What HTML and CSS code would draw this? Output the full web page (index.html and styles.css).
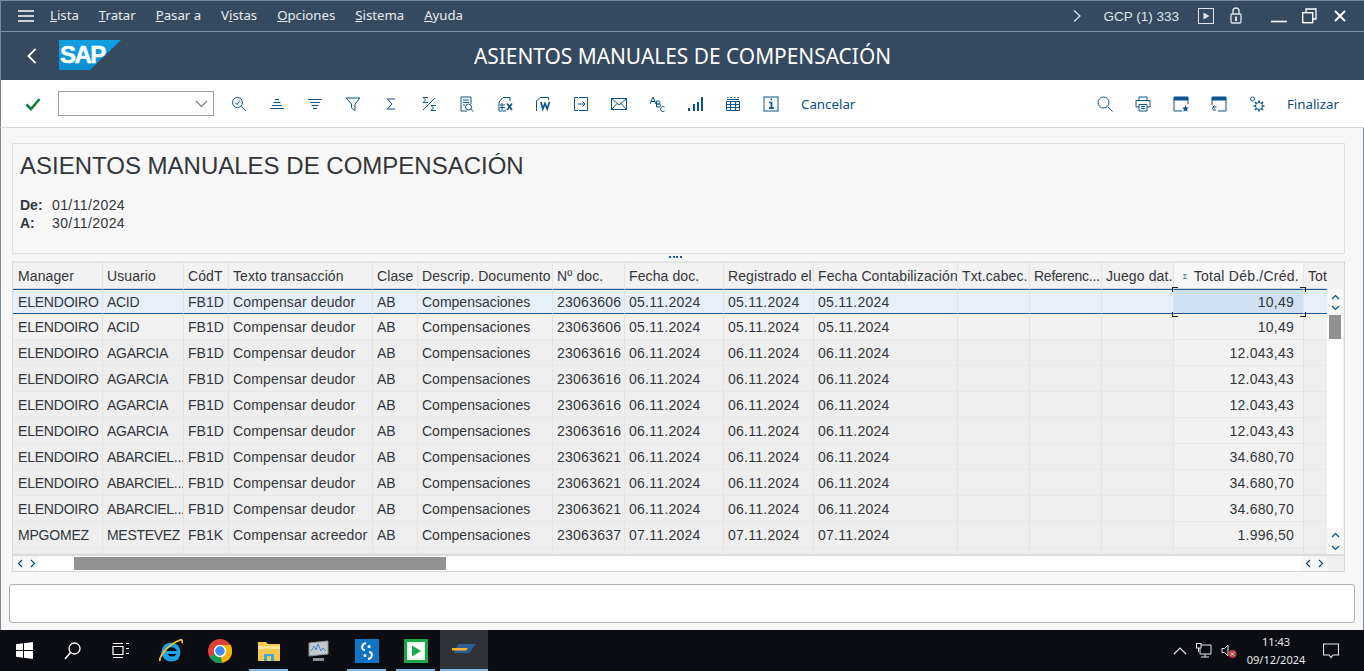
FILE: index.html
```html
<!DOCTYPE html>
<html lang="es">
<head>
<meta charset="utf-8">
<title>Asientos manuales de compensación</title>
<link rel="stylesheet" href="styles.css">
</head>
<body>
<div class="window">
  <div class="menubar">
    <svg class="hamb" width="16" height="12" viewBox="0 0 16 12"><path d="M0 1h16M0 6h16M0 11h16" stroke="#fff" stroke-width="1.4"/></svg>
    <nav class="menus">
      <span><u>L</u>ista</span><span><u>T</u>ratar</span><span><u>P</u>asar a</span><span>V<u>i</u>stas</span><span><u>O</u>pciones</span><span><u>S</u>istema</span><span><u>A</u>yuda</span>
    </nav>
    <div class="sysarea">
      <svg class="chev" width="8" height="12" viewBox="0 0 8 12"><path d="M1 .5 7 6 1 11.5" fill="none" stroke="#dfe5ea" stroke-width="1.2"/></svg>
      <span class="sysname">GCP (1) 333</span>
      <svg class="sysico1" width="16" height="16" viewBox="0 0 16 16"><rect x=".5" y=".5" width="15" height="15" fill="none" stroke="#dfe5ea"/><path d="M5.500 4.500v7l6-3.500z" fill="#dfe5ea"/></svg>
      <svg class="sysico2" width="12" height="17" viewBox="0 0 12 17"><path d="M3 7V4a3 3 0 0 1 6 0v3" fill="none" stroke="#dfe5ea" stroke-width="1.4"/><rect x="1" y="7" width="10" height="9" rx="1" fill="none" stroke="#dfe5ea" stroke-width="1.300"/><path d="M5 9.500h2v4.500H5z" fill="#dfe5ea"/></svg>
      <svg class="winbtn-min" width="16" height="3" viewBox="0 0 16 3"><path d="M0 1.500h16" stroke="#fff" stroke-width="1.600"/></svg>
      <svg class="winbtn-max" width="15" height="16" viewBox="0 0 15 16"><path d="M4 4V1h10v10h-3" fill="none" stroke="#fff" stroke-width="1.300"/><rect x=".7" y="4.700" width="10" height="10" fill="none" stroke="#fff" stroke-width="1.400"/></svg>
      <svg class="winbtn-close" width="12" height="12" viewBox="0 0 12 12"><path d="M1 1l10 10M11 1 1 11" stroke="#fff" stroke-width="1.800"/></svg>
    </div>
  </div>
  <div class="titlebar">
    <svg class="back" width="10" height="16" viewBox="0 0 10 16"><path d="M8.500 1 1.500 8l7 7" fill="none" stroke="#fff" stroke-width="1.800"/></svg>
    <div class="logo"><span>SAP</span></div>
    <h1 class="apptitle">ASIENTOS MANUALES DE COMPENSACIÓN</h1>
  </div>
  <div class="toolbar">
    <svg class="ok" width="16" height="14" viewBox="0 0 16 14"><path d="M1.500 7.500 6 12 14.500 2" fill="none" stroke="#107e3e" stroke-width="2.600"/></svg>
    <div class="combo"><svg width="13" height="8" viewBox="0 0 13 8"><path d="M1 1l5.500 5.500L12 1" fill="none" stroke="#6d7b87" stroke-width="1.100"/></svg></div>
    <div class="tools">
      <svg class="ico" viewBox="0 0 16 16"><circle cx="6.500" cy="6.500" r="5" /><path d="M10.500 10.500 15 15M4 6.500l2 2 3-4"/></svg>
      <svg class="ico" viewBox="0 0 16 16"><path d="M6 3.500h4M4.500 6.500h7M3 9.500h10M1 12.500h14"/></svg>
      <svg class="ico" viewBox="0 0 16 16"><path d="M1 3.500h14M3 6.500h10M4.500 9.500h7M6 12.500h4"/></svg>
      <svg class="ico" viewBox="0 0 16 16"><path d="M1 2h14L10 8v6.500L6.500 12V8z"/></svg>
      <svg class="ico" viewBox="0 0 16 16"><path d="M12 3H4.500L9 8l-4.500 5H12"/></svg>
      <svg class="ico" viewBox="0 0 16 16"><path d="M7 1.500H2l2.500 2.500L2 6.500h5M14 2 2 14M15 9.500h-5L12.500 12 10 14.500h5"/></svg>
      <svg class="ico" viewBox="0 0 16 16"><path d="M8 15H2V1h10v7M4 4h6M4 6.500h6M4 9h2"/><circle cx="9.500" cy="11" r="3"/><path d="M11.500 13l3 2.500"/></svg>
      <svg class="ico" viewBox="0 0 16 16"><path d="M2 6l4-4.500h7V5M2 6v9h7M3 9h5M3 11.500h5M5 7v7"/><path class="thick" d="M10 7.500l5 6.500M15 7.500l-5 6.500"/></svg>
      <svg class="ico" viewBox="0 0 16 16"><path d="M1.500 15V5l3.500-3.500h8.500V4"/><path class="thick" d="M6 6l1.800 7L10 7.500l2.200 5.500L14.500 6"/></svg>
      <svg class="ico" viewBox="0 0 16 16"><path d="M5 1.500H1.500v13H5M6 1.500h8.500v13H6M5 8h7M9.500 5.500 12 8l-2.500 2.500"/></svg>
      <svg class="ico" viewBox="0 0 16 16"><rect x=".5" y="2.500" width="15" height="11"/><path d="M.5 2.500 8 9l7.500-6.500M.5 13.500l5.500-6M15.500 13.500l-5.500-6"/></svg>
      <svg class="ico" viewBox="0 0 16 16"><path d="M1 8 4 1l3 7M2 5.500h4M7.500 5h2a1.500 1.500 0 0 1 0 3h-2zM7.500 8H10a1.500 1.500 0 0 1 0 3H7.500zM15.500 11a2.500 2.500 0 1 0 0 4"/></svg>
      <svg class="ico solid" viewBox="0 0 16 16"><path d="M1 12h2v3H1zM6 8h2v7H6zM10 6h2v9h-2zM14 1h2v14h-2z"/></svg>
      <svg class="ico" viewBox="0 0 16 16"><path d="M1.500 5.500h13v9h-13zM1.500 8.500h13M1.500 11.500h13M5.500 5.500v9M10.500 5.500v9"/><path d="M2 1.500h1.500M5.500 1.500h1.500M9 1.500h1.500M12.500 1.500h1.500M2 3.500h12"/></svg>
      <svg class="ico" viewBox="0 0 16 16"><rect x="1" y="1" width="14" height="14"/><path class="thick" d="M6 6.500h2.500V12M6 12.200h5M7.500 3.300h1.500"/></svg>
      <span class="tbtext">Cancelar</span>
    </div>
    <div class="tools-right">
      <svg class="ico" viewBox="0 0 16 16"><circle cx="6.500" cy="6.500" r="5.500"/><path d="M10.500 10.500 15.500 15.500"/></svg>
      <svg class="ico" viewBox="0 0 16 16"><path d="M4 4V1h8v3M1 11V4.500h14V11h-3M4 11H1M4 8.500h8V15H4zM6 10.500h4M6 12.500h4"/></svg>
      <svg class="ico" viewBox="0 0 16 16"><path d="M1 3h14v5M1 3v12h8"/><path class="bar" d="M1 1h14v3H1z"/><path class="solidp" d="M12.500 9l1 2.500 2.500.2-2 1.600.7 2.500-2.200-1.400-2.200 1.400.7-2.500-2-1.600 2.500-.2z"/></svg>
      <svg class="ico" viewBox="0 0 16 16"><path d="M1 3v6M15 3v12H7"/><path class="bar" d="M1 1h14v3H1z"/><path d="M5.500 11H3a1.500 1.500 0 0 0 0 3h2M3.500 9.500 2 11l1.500 1.500"/></svg>
      <svg class="ico" viewBox="0 0 16 16"><circle cx="3.500" cy="3" r="2"/><circle cx="10" cy="10" r="3.500"/><path class="thick" d="M10 4.500v2M10 13.500v2M4.500 10h2M13.500 10h2M6 6l1.500 1.500M12.500 12.500 14 14M6 14l1.500-1.500M12.500 7.500 14 6"/></svg>
      <span class="tbtext">Finalizar</span>
    </div>
  </div>

  <div class="content">
    <section class="hdr">
      <h2>ASIENTOS MANUALES DE COMPENSACIÓN</h2>
      <dl>
        <dt>De:</dt><dd>01/11/2024</dd>
        <dt>A:</dt><dd>30/11/2024</dd>
      </dl>
    </section>
    <div class="splitter"><span class="dots"></span></div>

    <section class="alv">
      <div class="grid">
        <div class="tablewrap">
          <table class="tbl">
            <colgroup>
              <col class="c1"><col class="c2"><col class="c3"><col class="c4"><col class="c5"><col class="c6"><col class="c7"><col class="c8"><col class="c9"><col class="c10"><col class="c11"><col class="c12"><col class="c13"><col class="c14"><col class="c15">
            </colgroup>
            <thead>
              <tr>
                <th>Manager</th><th>Usuario</th><th>CódT</th><th>Texto transacción</th><th>Clase</th><th>Descrip. Documento</th><th>Nº doc.</th><th>Fecha doc.</th><th>Registrado el</th><th>Fecha Contabilización</th><th>Txt.cabec.</th><th>Referenc...</th><th>Juego dat.</th><th class="sum"><span class="sig">Σ</span>Total Déb./Créd.</th><th>Tot</th>
              </tr>
            </thead>
            <tbody id="rows">
              <tr class="sel"><td>ELENDOIRO</td><td>ACID</td><td>FB1D</td><td>Compensar deudor</td><td>AB</td><td>Compensaciones</td><td>23063606</td><td>05.11.2024</td><td>05.11.2024</td><td>05.11.2024</td><td></td><td></td><td></td><td class="num cur">10,49</td><td></td></tr>
              <tr><td>ELENDOIRO</td><td>ACID</td><td>FB1D</td><td>Compensar deudor</td><td>AB</td><td>Compensaciones</td><td>23063606</td><td>05.11.2024</td><td>05.11.2024</td><td>05.11.2024</td><td></td><td></td><td></td><td class="num">10,49</td><td></td></tr>
              <tr><td>ELENDOIRO</td><td>AGARCIA</td><td>FB1D</td><td>Compensar deudor</td><td>AB</td><td>Compensaciones</td><td>23063616</td><td>06.11.2024</td><td>06.11.2024</td><td>06.11.2024</td><td></td><td></td><td></td><td class="num">12.043,43</td><td></td></tr>
              <tr><td>ELENDOIRO</td><td>AGARCIA</td><td>FB1D</td><td>Compensar deudor</td><td>AB</td><td>Compensaciones</td><td>23063616</td><td>06.11.2024</td><td>06.11.2024</td><td>06.11.2024</td><td></td><td></td><td></td><td class="num">12.043,43</td><td></td></tr>
              <tr><td>ELENDOIRO</td><td>AGARCIA</td><td>FB1D</td><td>Compensar deudor</td><td>AB</td><td>Compensaciones</td><td>23063616</td><td>06.11.2024</td><td>06.11.2024</td><td>06.11.2024</td><td></td><td></td><td></td><td class="num">12.043,43</td><td></td></tr>
              <tr><td>ELENDOIRO</td><td>AGARCIA</td><td>FB1D</td><td>Compensar deudor</td><td>AB</td><td>Compensaciones</td><td>23063616</td><td>06.11.2024</td><td>06.11.2024</td><td>06.11.2024</td><td></td><td></td><td></td><td class="num">12.043,43</td><td></td></tr>
              <tr><td>ELENDOIRO</td><td>ABARCIEL...</td><td>FB1D</td><td>Compensar deudor</td><td>AB</td><td>Compensaciones</td><td>23063621</td><td>06.11.2024</td><td>06.11.2024</td><td>06.11.2024</td><td></td><td></td><td></td><td class="num">34.680,70</td><td></td></tr>
              <tr><td>ELENDOIRO</td><td>ABARCIEL...</td><td>FB1D</td><td>Compensar deudor</td><td>AB</td><td>Compensaciones</td><td>23063621</td><td>06.11.2024</td><td>06.11.2024</td><td>06.11.2024</td><td></td><td></td><td></td><td class="num">34.680,70</td><td></td></tr>
              <tr><td>ELENDOIRO</td><td>ABARCIEL...</td><td>FB1D</td><td>Compensar deudor</td><td>AB</td><td>Compensaciones</td><td>23063621</td><td>06.11.2024</td><td>06.11.2024</td><td>06.11.2024</td><td></td><td></td><td></td><td class="num">34.680,70</td><td></td></tr>
              <tr><td>MPGOMEZ</td><td>MESTEVEZ</td><td>FB1K</td><td>Compensar acreedor</td><td>AB</td><td>Compensaciones</td><td>23063637</td><td>07.11.2024</td><td>07.11.2024</td><td>07.11.2024</td><td></td><td></td><td></td><td class="num">1.996,50</td><td></td></tr>
              <tr class="stub"><td></td><td></td><td></td><td></td><td></td><td></td><td></td><td></td><td></td><td></td><td></td><td></td><td></td><td></td><td></td></tr>
            </tbody>
          </table>
          <span class="corner tl"></span><span class="corner tr"></span><span class="corner bl"></span><span class="corner br"></span>
        </div>
        <div class="vscroll">
          <div class="vbtn">
            <svg width="9" height="6" viewBox="0 0 9 6"><path d="M1 5l3.500-3.500L8 5"/></svg>
            <svg width="9" height="6" viewBox="0 0 9 6"><path d="M1 1l3.500 3.500L8 1"/></svg>
          </div>
          <div class="vtrack"><div class="vthumb"></div></div>
          <div class="vbtn wide">
            <svg width="9" height="6" viewBox="0 0 9 6"><path d="M1 5l3.500-3.500L8 5"/></svg>
            <svg width="9" height="6" viewBox="0 0 9 6"><path d="M1 1l3.500 3.500L8 1"/></svg>
          </div>
        </div>
      </div>
      <div class="hscroll">
        <div class="harrows">
          <svg width="6" height="9" viewBox="0 0 6 9"><path d="M5 1 1.500 4.500 5 8"/></svg>
          <svg width="6" height="9" viewBox="0 0 6 9"><path d="M1 1l3.500 3.500L1 8"/></svg>
        </div>
        <div class="htrack"><div class="hthumb"></div></div>
        <div class="harrows">
          <svg width="6" height="9" viewBox="0 0 6 9"><path d="M5 1 1.500 4.500 5 8"/></svg>
          <svg width="6" height="9" viewBox="0 0 6 9"><path d="M1 1l3.500 3.500L1 8"/></svg>
        </div>
        <div class="hcorner"></div>
      </div>
    </section>
    <div class="statusbox"></div>
  </div>

  <div class="taskbar">
    <div class="tb-sys">
      <svg width="17" height="17" viewBox="0 0 17 17"><path d="M0 2.300 7 1.300v6.700H0zM8 1.200 17 0v8H8zM0 9h7v6.700l-7-1zM8 9h9v8l-9-1.200z" fill="#fff"/></svg>
    </div>
    <div class="tb-sys">
      <svg width="17" height="18" viewBox="0 0 17 18"><circle cx="10.500" cy="6.500" r="5.500" fill="none" stroke="#fff" stroke-width="1.300"/><path d="M6.500 10.500 1 17" stroke="#fff" stroke-width="1.500"/></svg>
    </div>
    <div class="tb-sys">
      <svg width="17" height="15" viewBox="0 0 17 15"><path d="M1 .5h10M1 14.500h10M1 3.500h10v8H1zM14 .5h3M14 5.500h3M14 10.500h3" fill="none" stroke="#fff" stroke-width="1.200"/></svg>
    </div>
    <div class="tb-slot first">
      <svg width="24" height="24" viewBox="0 0 24 24"><ellipse cx="12" cy="13" rx="9.500" ry="9.500" fill="#1fa0e0"/><ellipse cx="12.500" cy="13" rx="5.500" ry="4.500" fill="#000d14"/><path d="M4 12h17v3H9q1 3 5 3 3 0 5-1l1 3q-3 2-7 2-9 0-9-10z" fill="#1fa0e0"/><path d="M8 11.500q1-3 4.500-3t4 3z" fill="#000d14"/><path d="M1 22c-1-4 7-16 20-21 2-.7 3 1 2 3" fill="none" stroke="#f2c12e" stroke-width="1.800"/></svg>
    </div>
    <div class="tb-slot">
      <svg width="24" height="24" viewBox="0 0 24 24"><circle cx="12" cy="12" r="12" fill="#db4437"/><path d="M12 12 1.600 18A12 12 0 0 0 14 23.800z" fill="#0f9d58"/><path d="M12 6h10.600A12 12 0 0 1 14 23.800L12 12z" fill="#f4b400"/><circle cx="12" cy="12" r="5.500" fill="#4285f4" stroke="#fff" stroke-width="1.500"/></svg>
    </div>
    <div class="tb-slot run">
      <svg width="22" height="20" viewBox="0 0 22 20"><path d="M0 1h8l2 2h12v17H0z" fill="#f4c94e"/><path d="M0 5h22v3H0z" fill="#fbe49a"/><path d="M6 13h10v7H6z" fill="#3fa3dc"/><path d="M9 15h4v5H9z" fill="#f4c94e"/></svg>
    </div>
    <div class="tb-slot">
      <svg width="24" height="22" viewBox="0 0 24 22"><path d="M3 3 22 1v13L3 16z" fill="#c3c9cf" stroke="#8b939a"/><path d="M5 11l3-5 2 4 2-6 3 7 2-3 3 3" fill="none" stroke="#4d84c4"/><path d="M7 18h11v3H7z" fill="#8b939a"/></svg>
    </div>
    <div class="tb-slot run">
      <svg width="24" height="24" viewBox="0 0 24 24"><rect width="24" height="24" fill="#0f74c4"/><path d="M11 4C6 5 6 11 10 11M13 20c5-1 5-7 1-7" fill="none" stroke="#fff" stroke-width="2"/><circle cx="14" cy="7.500" r="1.500" fill="#fff"/><circle cx="10" cy="16.500" r="1.500" fill="#fff"/></svg>
    </div>
    <div class="tb-slot run">
      <svg width="24" height="24" viewBox="0 0 24 24"><rect x="1.500" y="1.500" width="21" height="21" fill="#e7f6ec" stroke="#19a74a" stroke-width="3"/><rect x="5" y="5" width="14" height="14" fill="#fff"/><path d="M8 6.500v11l9-5.500z" fill="#19a74a"/></svg>
    </div>
    <div class="tb-active">
      <svg width="24" height="12" viewBox="0 0 24 12"><path d="M6 0h18l-7 9H2z" fill="#2c5f92"/><path d="M0 4h16l-2 2.500H0z" fill="#f2b632"/></svg>
    </div>
    <div class="tray">
      <svg width="14" height="8" viewBox="0 0 14 8"><path d="M1 7 7 1l6 6" fill="none" stroke="#dfe3e6" stroke-width="1.200"/></svg>
      <svg width="16" height="15" viewBox="0 0 16 15"><path d="M4 2h11v9H4zM5 14h8M9 11v3" fill="none" stroke="#e6e9eb"/><rect x=".5" y=".5" width="4.500" height="4.500" fill="#0b0d12" stroke="#e6e9eb"/><path d="M2.500 5v4" stroke="#e6e9eb"/></svg>
      <span class="speaker">
        <svg width="16" height="14" viewBox="0 0 16 14"><path d="M1 4.500h2.500L7 1v11L3.500 8.500H1z" fill="none" stroke="#e6e9eb"/><circle cx="11.500" cy="10" r="4" fill="#c03a49"/><path d="M10 8.500l3 3M13 8.500l-3 3" stroke="#fff"/></svg>
      </span>
      <div class="clock"><div>11:43</div><div>09/12/2024</div></div>
      <svg class="notif" width="16" height="16" viewBox="0 0 16 16"><path d="M.5 1h15v11H10l-2 2.500L6 12H.5z" fill="none" stroke="#e6e9eb" stroke-width="1.100"/></svg>
    </div>
  </div>
</div>
</body>
</html>
```
FILE: styles.css
```css
* { box-sizing: border-box; }
html, body { margin: 0; padding: 0; height: 100%; overflow: hidden; }
body { font-family: "Liberation Sans", Arial, sans-serif; color: #32363a; }
.window { width: 1364px; height: 671px; display: flex; flex-direction: column; background: #f7f7f7; }

.menubar { height: 32px; background: #354a5f; border-top: 1px solid #7d8b99; border-bottom: 1px solid #8494a3; border-left: 1px solid #7a8997; display: flex; align-items: center; color: #e8ecef; font-size: 13px; flex: none; }
.hamb { margin-left: 17px; margin-right: 16px; flex: none; }
.menus { display: flex; gap: 20px; font-family: "Noto Sans", sans-serif; font-size: 13.200px; margin-top: -2px; }
.sysarea { margin-left: auto; display: flex; align-items: center; }
.chev { margin-right: 22px; }
.sysname { font-size: 13.500px; color: #dfe5ea; margin-right: 19px; }
.sysico1 { margin-right: 16px; }
.sysico2 { margin-right: 29px; margin-bottom: 2px; }
.winbtn-min { margin-right: 15px; margin-top: 10px; }
.winbtn-max { margin-right: 17px; }
.winbtn-close { margin-right: 18px; }

.titlebar { height: 48px; background: #354a5f; border-left: 1px solid #7a8997; display: flex; align-items: center; position: relative; flex: none; }
.back { margin-left: 26px; margin-right: 22px; }
.logo { width: 62px; height: 30px; margin-bottom: 2px; background: linear-gradient(#0fa0e3, #0a8fd0); clip-path: polygon(0 0, 100% 0, 50% 100%, 0 100%); padding-left: 1px; }
.logo span { font-weight: 700; font-size: 24px; line-height: 30px; letter-spacing: -1.500px; color: #fff; font-family: "Liberation Sans", sans-serif; -webkit-text-stroke: .5px #fff; }
.apptitle { position: absolute; left: 0; right: 0; top: 12px; margin: 0; text-align: center; font-size: 20.900px; line-height: 24px; font-weight: 400; color: #fff; font-family: "Noto Sans", sans-serif; }

.toolbar { height: 48px; background: #fff; border-bottom: 1px solid #d9d9d9; border-left: 1px solid #7a8997; display: flex; align-items: center; padding-left: 24px; flex: none; }
.ok { margin-right: 17px; flex: none; }
.combo { width: 156px; height: 25px; border: 1px solid #a0a0a0; display: flex; align-items: center; justify-content: flex-end; padding-right: 5px; background: #fff; margin-right: 17px; flex: none; }
.tools { display: flex; align-items: center; gap: 22px; }
.tools-right { display: flex; align-items: center; gap: 22px; margin-left: auto; padding-right: 25px; }
.ico { width: 16px; height: 16px; flex: none; fill: none; stroke: #0a5490; stroke-width: 1; }
.ico .thick { stroke-width: 1.700; }
.ico .bar { fill: #0a5490; }
.ico .solidp { fill: #0a5490; stroke: none; }
.ico.solid { fill: #0a5490; stroke: none; }
.tbtext { font-family: "Noto Sans", sans-serif; font-size: 13.300px; color: #0a4d85; }

.content { flex: 1; display: flex; flex-direction: column; padding: 15px 18px 0 11px; border-left: 1px solid #7a8997; border-right: 1px solid #7a8997; min-height: 0; }
.hdr { height: 111px; background: #f7f7f7; border: 1px solid #e0e0e0; padding: 7px 7px; flex: none; }
.hdr h2 { margin: 0; font-size: 24px; line-height: 30px; font-weight: 400; color: #32363a; }
.hdr dl { margin: 15px 0 0; display: grid; grid-template-columns: 32px auto; justify-content: start; font-size: 14px; line-height: 18px; }
.hdr dt { font-weight: 700; }
.hdr dd { margin: 0; letter-spacing: .4px; }
.splitter { height: 7px; display: flex; justify-content: center; align-items: flex-start; padding-top: 2px; flex: none; }
.dots { width: 14px; height: 2px; margin-right: 6px; background: repeating-linear-gradient(90deg, #1a5a96 0 2px, transparent 2px 3.500px); }

.alv { height: 311px; background: #f2f2f2; border: 1px solid #d9d9d9; border-top: 2px solid #e4e4e4; display: flex; flex-direction: column; flex: none; }
.grid { display: flex; height: 291px; flex: none; }
.tablewrap { flex: 1; min-width: 0; overflow: hidden; position: relative; }
.tbl { border-collapse: separate; border-spacing: 0; table-layout: fixed; width: 1347px; font-size: 14px; }
.c1 { width: 90px; } .c2 { width: 81px; } .c3 { width: 45px; } .c4 { width: 144px; } .c5 { width: 45px; } .c6 { width: 135px; } .c7 { width: 72px; } .c8 { width: 99px; } .c9 { width: 90px; } .c10 { width: 144px; } .c11 { width: 72px; } .c12 { width: 72px; } .c13 { width: 72px; } .c14 { width: 130px; } .c15 { width: 56px; }
.tbl th { height: 26px; font-weight: 400; text-align: left; padding: 1px 0 0 4px; background: #f2f2f2; border-right: 1px solid #e5e5e5; border-bottom: 1px solid #d5d5d5; white-space: nowrap; overflow: hidden; color: #32363a; letter-spacing: .1px; }
.tbl th:nth-child(12) { letter-spacing: -.25px; }
.tbl th:first-child, .tbl td:first-child { padding-left: 5px; }
.tbl th.sum { background: #f7f7f7; text-align: right; padding-right: 4px; letter-spacing: .25px; }
.sig { font-size: 8px; color: #1a5a96; margin-right: 6px; vertical-align: 2px; }
.tbl td { height: 26px; padding: 0 0 0 4px; background: #f2f2f2; border-right: 1px solid #e4e4e4; border-bottom: 1px solid #e8e8e8; white-space: nowrap; overflow: hidden; color: #32363a; }
.tbl td:nth-child(1) { letter-spacing: -.2px; }
.tbl td:nth-child(2) { letter-spacing: -.3px; }
.tbl td:nth-child(4) { letter-spacing: .15px; }
.tbl td:nth-child(n+7) { letter-spacing: .25px; }
.tbl tbody tr:nth-child(n+3) td { background: #eeeeee; }
.tbl tbody tr:nth-child(2) td { background: #f2f2f2; }
.tbl tbody tr:nth-child(n+3) td.num { background: #f2f2f2; }
.tbl td.num { text-align: right; padding-right: 9px; }
.tbl tr.sel td { height: 25px; background: #e5f0fa; border-top: 1px solid #1a5a96; border-bottom: 1px solid #1a5a96; }
.tbl tr.sel td.cur { background: #cfe1f3; }
.tbl tr.stub td { height: 6px; }
.corner { position: absolute; width: 6px; height: 5px; border: 0 solid #222; }
.corner.tl { left: 1159px; top: 24px; border-top-width: 1px; border-left-width: 1px; }
.corner.tr { left: 1287px; top: 24px; border-top-width: 1px; border-right-width: 1px; }
.corner.bl { left: 1159px; top: 49px; border-bottom-width: 1px; border-left-width: 1px; }
.corner.br { left: 1287px; top: 49px; border-bottom-width: 1px; border-right-width: 1px; }

.vscroll { width: 16px; flex: none; display: flex; flex-direction: column; background: #fff; margin-top: 26px; margin-right: 1px; }
.vbtn { height: 26px; display: flex; flex-direction: column; align-items: center; justify-content: center; gap: 5px; background: #f7f7f7; flex: none; }
.vbtn.wide { gap: 7px; }
.vbtn path, .harrows path { fill: none; stroke: #0a4d85; stroke-width: 1.200; }
.vtrack { flex: 1; background: #fff; }
.vthumb { width: 12px; height: 24px; margin: 0 auto; background: #929292; }

.hscroll { height: 17px; display: flex; align-items: stretch; border-top: 2px solid #dcdcdc; flex: none; }
.harrows { width: 26px; display: flex; justify-content: center; align-items: center; gap: 7px; flex: none; background: #f7f7f7; }
.htrack { flex: 1; background: #fff; padding: 1px 0 1px 35px; }
.hthumb { width: 372px; height: 100%; background: #929292; }
.hcorner { width: 17px; flex: none; background: #f0f0f0; }

.statusbox { height: 39px; margin-top: 12px; margin-left: -3px; background: #fff; border: 1px solid #b0b0b0; border-radius: 3px; width: 1346px; flex: none; }

.taskbar { height: 41px; background: #0b0d12; display: flex; align-items: center; flex: none; color: #e6e9eb; }
.tb-sys { width: 48px; height: 41px; display: flex; align-items: center; justify-content: center; flex: none; }
.tb-slot { width: 49px; height: 41px; display: flex; align-items: center; justify-content: center; flex: none; position: relative; }
.tb-slot.first { margin-left: 2px; }
.tb-slot.run::after { content: ""; position: absolute; left: 5px; right: 5px; bottom: 0; height: 2px; background: #76b9ed; }
.tb-active { width: 48px; height: 41px; background: #2f3338; display: flex; align-items: center; justify-content: center; border-bottom: 2px solid #76b9ed; flex: none; }
.tray { margin-left: auto; display: flex; align-items: center; gap: 9px; padding-right: 25px; }
.clock { font-family: "Noto Sans", sans-serif; font-size: 11px; line-height: 18px; text-align: center; width: 60px; }
.speaker { display: flex; }
.notif { margin-left: 8px; }
```
